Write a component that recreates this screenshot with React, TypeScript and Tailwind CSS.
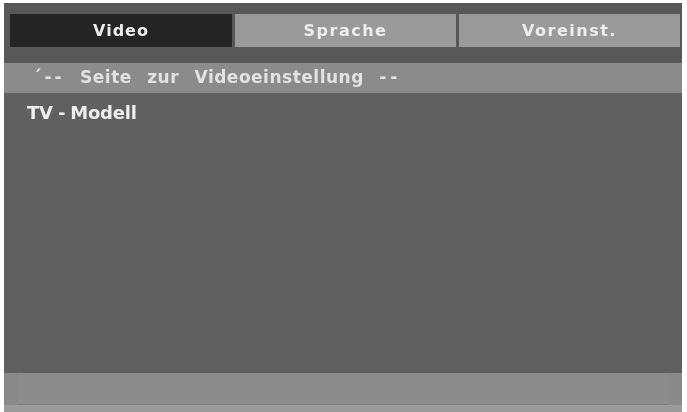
import React from 'react';

const tabs = [
  { label: 'Video', active: true },
  { label: 'Sprache', active: false },
  { label: 'Voreinst.', active: false },
];

const App: React.FC = () => {
  return (
    <div
      className="w-[687px] h-[412px] bg-white pt-[3px] pl-[4px] pr-[5px] overflow-hidden"
      style={{ fontFamily: '"DejaVu Sans", "Liberation Sans", sans-serif' }}
    >
      <div className="h-full flex flex-col bg-[#5d5d5d] blur-[0.4px]">
        {/* tabs */}
        <div className="pt-[11px] pl-[6px] pr-[2px] pb-[16px] bg-[#585858]">
          <div className="h-[33px] flex gap-[3px]">
            {tabs.map(t => (
              <div
                key={t.label}
                className={
                  t.active
                    ? 'w-[222px] flex items-center justify-center bg-[#252525] text-[#ececec] text-[16px] font-bold tracking-[1px]'
                    : 'flex-1 flex items-center justify-center bg-[#9a9a9a] text-[#eeeeee] text-[16px] font-bold tracking-[1.5px]'
                }
              >
                {t.label}
              </div>
            ))}
          </div>
        </div>

        {/* page header strip */}
        <div className="h-[30px] flex items-center pl-[29px] bg-[#8b8b8b] text-[#e2e2e2] text-[17px] font-bold tracking-[0.5px] [word-spacing:9px] whitespace-pre">
          <span className="tracking-[3px]">´--</span>
          {' Seite zur Videoeinstellung '}
          <span className="tracking-[4px]">--</span>
        </div>

        {/* content */}
        <div className="flex-1 bg-[#606060] pt-[6px] pl-[23px]">
          <div className="text-[#eeeeee] text-[18px] font-bold tracking-[-0.2px] [word-spacing:-1px] whitespace-pre">TV - Modell</div>
        </div>

        {/* footer */}
        <div className="h-[32px] bg-[#898989] px-[14px]">
          <div className="h-full bg-[#8c8c8c] border-b border-[#7d7d7d]" />
        </div>
        <div className="h-[7px] bg-[#9a9a9a]" />
      </div>
    </div>
  );
};

export default App;
